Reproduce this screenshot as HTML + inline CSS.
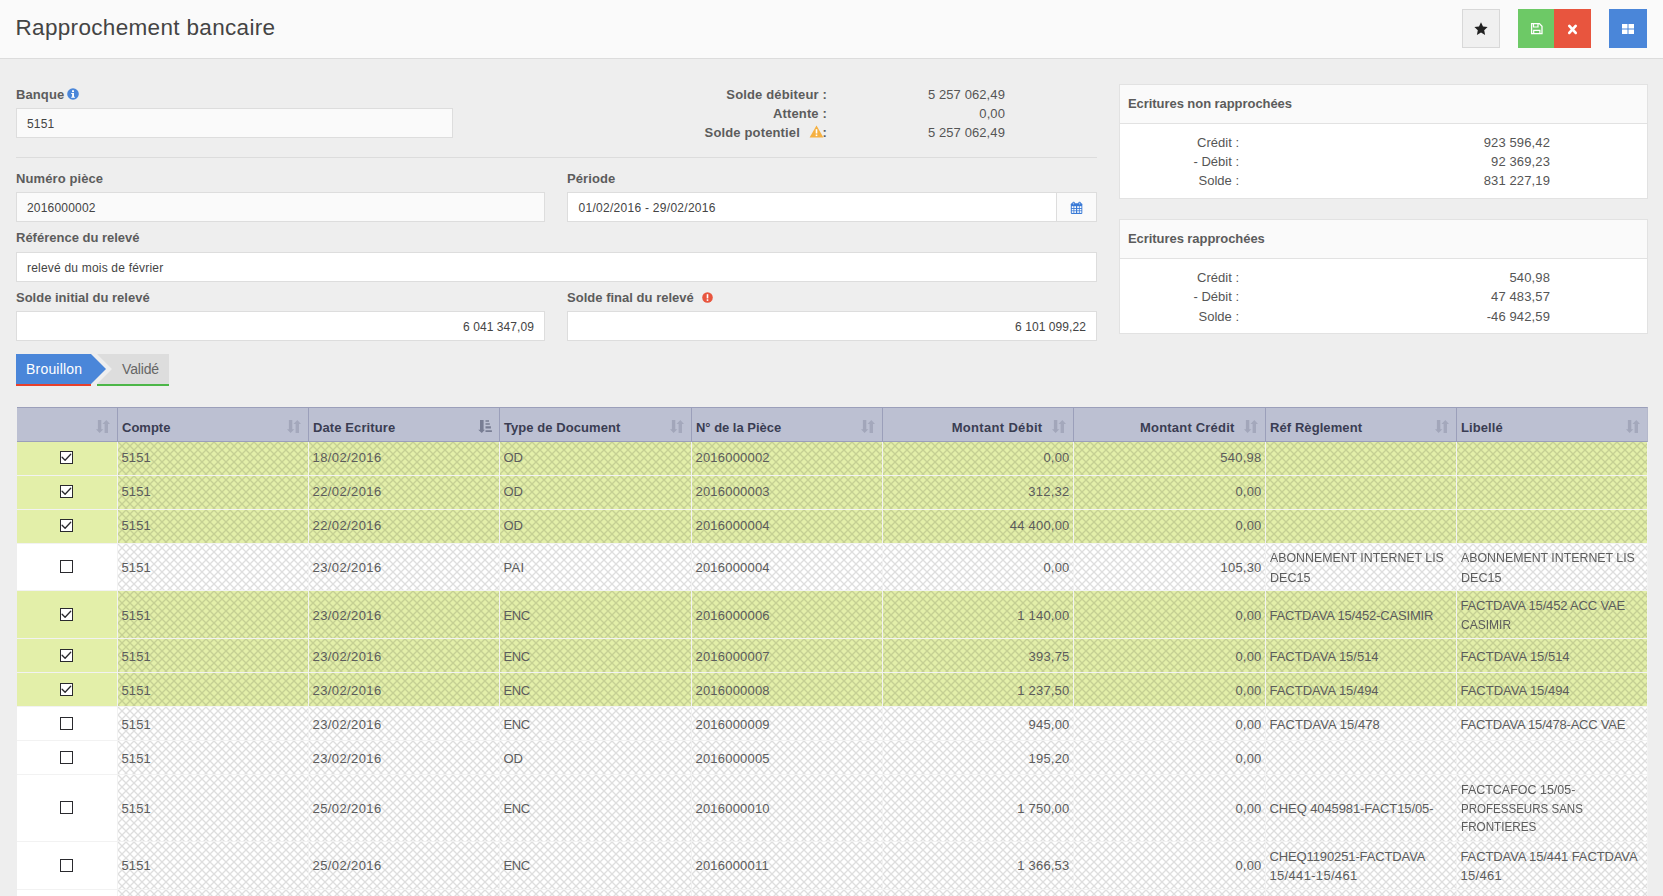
<!DOCTYPE html>
<html lang="fr">
<head>
<meta charset="utf-8">
<title>Rapprochement bancaire</title>
<style>
*{box-sizing:border-box;margin:0;padding:0}
html,body{width:1663px;height:896px;overflow:hidden}
body{background:#eee;font-family:"Liberation Sans",sans-serif;font-size:13px;color:#555;position:relative}
.abs{position:absolute}
#hdr{position:absolute;left:0;top:0;width:1663px;height:59px;background:#fafafa;border-bottom:1px solid #dcdcdc}
#title{position:absolute;left:15.5px;top:14px;font-size:22.5px;line-height:28px;color:#444;letter-spacing:.33px;white-space:nowrap}
.btn{position:absolute;top:9px;width:38px;height:38.5px}
.btn svg{position:absolute;left:0;top:1px}
.lbl{position:absolute;font-weight:bold;font-size:13px;line-height:19px;color:#5c5c5c;white-space:nowrap;letter-spacing:.1px}
.inp{position:absolute;height:30px;border:1px solid #ddd;background:#fff;font-size:12px;line-height:30px;color:#444;padding:0 10px;white-space:nowrap;letter-spacing:.2px}
.inp.ro{background:#fafafa}
.inp.r{text-align:right;letter-spacing:.08px}
.sum{position:absolute;font-size:13px;line-height:19px;white-space:nowrap;text-align:right;color:#555;letter-spacing:.1px}
.sum.b{font-weight:bold;letter-spacing:.15px;color:#5c5c5c}
.panel{position:absolute;left:1119px;width:529px;height:115px;background:#fff;border:1px solid #e2e2e2}
.panel .ph{height:39px;background:#fafafa;border-bottom:1px solid #e2e2e2;font-weight:bold;line-height:37px;padding-left:8px;color:#5c5c5c;letter-spacing:-.06px}
.panel .pr{position:absolute;left:0;width:100%;height:19px;line-height:19px}
.panel .pr span{position:absolute;top:0;text-align:right;white-space:nowrap}
.panel .pr .k{right:408px}
.panel .pr .v{right:97px;letter-spacing:.12px}
#grid{position:absolute;left:17px;top:407px;width:1631px;border-collapse:separate;border-spacing:0;table-layout:fixed;font-size:13px;color:#5c5c5c}
#grid th{height:35px;background:#bcc0d2;border:1px solid #9b9fba;border-left:none;text-align:left;padding:5px 4px 0 4px;font-weight:bold;color:#3a3d52;position:relative;white-space:nowrap;font-size:13px;letter-spacing:.1px}
#grid th:first-child{border-left:none}
#grid th.r{text-align:right;padding-right:30.500px}
#grid th:last-child{border-right-color:#b4b8cb}
#grid td{height:34px;padding:3.5px 4px 3.5px 3.5px;line-height:18.570px;border-right:1px solid #f2f2f2;border-bottom:1px solid #f2f2f2;vertical-align:middle;letter-spacing:.2px;
 background-color:#fff;
position:relative;isolation:isolate}
#grid td::before{content:"";position:absolute;left:0;top:0;right:0;bottom:0;z-index:-1;background:rgba(0,0,0,.13);
 -webkit-mask-image:linear-gradient(45deg,transparent 41.5%,#000 46.5%,#000 53.5%,transparent 58.5%),linear-gradient(-45deg,transparent 41.5%,#000 46.5%,#000 53.5%,transparent 58.5%);-webkit-mask-size:8px 8px;
 mask-image:linear-gradient(45deg,transparent 41.5%,#000 46.5%,#000 53.5%,transparent 58.5%),linear-gradient(-45deg,transparent 41.5%,#000 46.5%,#000 53.5%,transparent 58.5%);mask-size:8px 8px}
#grid td:first-child::before{display:none}
#grid td.r{text-align:right;padding-right:3.5px}
#grid td:first-child{background-image:none;text-align:center;padding:0}
#grid tr.g td{background-color:#e3efa9}
#grid td span.l{display:block;white-space:nowrap}
#grid td span.x{display:inline-block;transform-origin:0 50%;letter-spacing:0}
.cb{display:inline-block;width:13px;height:13px;border:1px solid #2a2a2e;background:#fff;vertical-align:middle;position:relative;top:-1px;left:-1px}
.cb svg{display:block}
#grid tr.lo td{padding-top:4.500px;padding-bottom:2.500px}
#grid tr.lo td:first-child{padding:0}
#grid tr.c0 .cb{top:0}
#grid tr.lh20 td{line-height:20px;padding-top:3px;padding-bottom:2px}
#grid tr.lh20 td:first-child{padding:0}
#grid tr.lo span.s1{position:relative;top:1px}
.sort{position:absolute;right:7.5px;top:12px}
</style>
</head>
<body>
<div id="hdr">
  <div id="title">Rapprochement bancaire</div>

  <div class="btn" style="left:1462px;background:#f0f0f0;border:1px solid #d8d8d8">
    <svg width="36" height="36" viewBox="0 0 36 36"><path d="M18 11.2l2 4.3 4.6.6-3.4 3.2.9 4.6-4.1-2.3-4.1 2.3.9-4.6-3.4-3.2 4.6-.6z" fill="#222"/></svg>
  </div>
  <div class="btn" style="left:1518px;width:36px;background:#6dc966">
    <svg width="36" height="38" viewBox="0 0 36 38"><path d="M13.600 13.600h7.800l2.600 2.600v7.400h-10.400z" fill="none" stroke="#fff" stroke-width="1.300"/><path d="M15.500 13.800v3.200h4.500v-3.200" fill="none" stroke="#fff" stroke-width="1.200"/><path d="M15.700 23.500v-3.200h6.200v3.200" fill="none" stroke="#fff" stroke-width="1.200"/></svg>
  </div>
  <div class="btn" style="left:1554px;width:37px;background:#e8553e">
    <svg width="37" height="38" viewBox="0 0 37 38"><path d="M15.300 15.900l6.400 7M21.700 15.900l-6.400 7" stroke="#fff" stroke-width="2.700" stroke-linecap="round" fill="none"/></svg>
  </div>
  <div class="btn" style="left:1609px;background:#4a86d9">
    <svg width="38" height="38" viewBox="0 0 38 38"><rect x="13" y="14" width="5.500" height="4.500" fill="#fff"/><rect x="19.500" y="14" width="5.500" height="4.500" fill="#fff"/><rect x="13" y="19.500" width="5.500" height="4.500" fill="#fff"/><rect x="19.500" y="19.500" width="5.500" height="4.500" fill="#fff"/></svg>
  </div>
</div>

<!-- form -->
<div class="lbl" style="left:16px;top:85px">Banque</div>
<svg class="abs" style="left:67px;top:88px" width="12" height="12" viewBox="0 0 12 12"><circle cx="6" cy="6" r="5.800" fill="#4a86d9"/><rect x="5" y="2.300" width="2" height="1.800" fill="#fff"/><path d="M4.200 5h2.800v3.700h.9v1h-3.700v-1h.9v-2.700h-.9z" fill="#fff"/></svg>
<div class="inp ro" style="left:16px;top:108px;width:437px">5151</div>

<div class="sum b" style="right:836px;top:85px">Solde débiteur :</div>
<div class="sum b" style="right:836px;top:104px">Attente :</div>
<div class="sum b" style="right:836px;top:123px">Solde potentiel &nbsp;<span style="display:inline-block;width:15px"></span>:</div>
<svg class="abs" style="left:809px;top:125px" width="15" height="13" viewBox="0 0 15 13"><path d="M7.500 .6L14.400 12.400H.6z" fill="#f5b041"/><rect x="6.700" y="4.200" width="1.600" height="4.300" fill="#fff"/><rect x="6.700" y="9.500" width="1.600" height="1.600" fill="#fff"/></svg>
<div class="sum" style="right:658px;top:85px">5 257 062,49</div>
<div class="sum" style="right:658px;top:104px">0,00</div>
<div class="sum" style="right:658px;top:123px">5 257 062,49</div>

<div class="abs" style="left:16px;top:157px;width:1081px;height:1px;background:#dcdcdc"></div>

<div class="lbl" style="left:16px;top:169px">Numéro pièce</div>
<div class="inp ro" style="left:16px;top:192px;width:529px">2016000002</div>
<div class="lbl" style="left:567px;top:169px">Période</div>
<div class="inp" style="left:567px;top:192px;width:490px;letter-spacing:.28px;padding-left:10.500px">01/02/2016 - 29/02/2016</div>
<div class="abs" style="left:1056px;top:192px;width:41px;height:30px;border:1px solid #ddd;background:#fafafa">
  <svg width="39" height="28" viewBox="0 0 39 28"><rect x="13.800" y="10.300" width="11.500" height="10.600" rx="1" fill="#3b7bd6"/><rect x="15.400" y="8.800" width="2.400" height="3" rx="1" fill="#3b7bd6"/><rect x="21.400" y="8.800" width="2.400" height="3" rx="1" fill="#3b7bd6"/><rect x="16.100" y="9.600" width="1" height="1.800" rx=".5" fill="#a9c4ec"/><rect x="22.100" y="9.600" width="1" height="1.800" rx=".5" fill="#a9c4ec"/><g fill="#fff"><rect x="14.8" y="13.2" width="1.7" height="1.9"/><rect x="14.8" y="16.0" width="1.7" height="1.4"/><rect x="14.8" y="18.2" width="1.7" height="1.7"/><rect x="17.3" y="13.2" width="1.7" height="1.9"/><rect x="17.3" y="16.0" width="1.7" height="1.4"/><rect x="17.3" y="18.2" width="1.7" height="1.7"/><rect x="20.2" y="13.2" width="1.7" height="1.9"/><rect x="20.2" y="16.0" width="1.7" height="1.4"/><rect x="20.2" y="18.2" width="1.7" height="1.7"/><rect x="22.7" y="13.2" width="1.7" height="1.9"/><rect x="22.7" y="16.0" width="1.7" height="1.4"/><rect x="22.7" y="18.2" width="1.7" height="1.7"/></g></svg>
</div>

<div class="lbl" style="left:16px;top:228px;letter-spacing:0">Référence du relevé</div>
<div class="inp" style="left:16px;top:252px;width:1081px">relevé du mois de février</div>

<div class="lbl" style="left:16px;top:288px;letter-spacing:0">Solde initial du relevé</div>
<div class="inp r" style="left:16px;top:311px;width:529px">6 041 347,09</div>
<div class="lbl" style="left:567px;top:288px;letter-spacing:.02px">Solde final du relevé</div>
<svg class="abs" style="left:702px;top:292px" width="11" height="11" viewBox="0 0 11 11"><circle cx="5.500" cy="5.500" r="5.300" fill="#e8553e"/><rect x="4.700" y="2.200" width="1.600" height="4.200" fill="#fff"/><rect x="4.700" y="7.300" width="1.600" height="1.600" fill="#fff"/></svg>
<div class="inp r" style="left:567px;top:311px;width:530px">6 101 099,22</div>

<!-- steps -->
<div class="abs" style="left:16px;top:354px;width:75px;height:32px;background:#4a86d9;border-bottom:2px solid #e8402c;color:#fff;font-size:14px;line-height:30px;padding-left:10px;letter-spacing:.2px">Brouillon</div>
<svg class="abs" style="left:91px;top:354px" width="16" height="32" viewBox="0 0 16 32"><path d="M0 0L15 15L0 30z" fill="#4a86d9"/><path d="M0 30h0v2h-0z" fill="#e8402c"/></svg>
<svg class="abs" style="left:97px;top:354px" width="72" height="32" viewBox="0 0 72 32"><path d="M0 0H72V30H0L15 15z" fill="#ddd"/><rect x="0" y="30" width="72" height="2" fill="#4cb648"/></svg>
<div class="abs" style="left:122px;top:354px;height:30px;line-height:30px;color:#666;font-size:14px;letter-spacing:-.15px">Validé</div>

<!-- panels -->
<div class="panel" style="top:84px">
  <div class="ph">Ecritures non rapprochées</div>
  <div class="pr" style="top:48px"><span class="k">Crédit :</span><span class="v">923 596,42</span></div>
  <div class="pr" style="top:67px"><span class="k">- Débit :</span><span class="v">92 369,23</span></div>
  <div class="pr" style="top:86px"><span class="k">Solde :</span><span class="v">831 227,19</span></div>
</div>
<div class="panel" style="top:219px">
  <div class="ph">Ecritures rapprochées</div>
  <div class="pr" style="top:48px"><span class="k">Crédit :</span><span class="v">540,98</span></div>
  <div class="pr" style="top:67px"><span class="k">- Débit :</span><span class="v">47 483,57</span></div>
  <div class="pr" style="top:87px"><span class="k">Solde :</span><span class="v">-46 942,59</span></div>
</div>
<!-- grid -->
<table id="grid">
<colgroup><col style="width:101px"><col style="width:191px"><col style="width:191px"><col style="width:192px"><col style="width:191px"><col style="width:191px"><col style="width:192px"><col style="width:191px"><col style="width:191px"></colgroup>
<thead><tr><th><svg class="sort" width="14" height="13" viewBox="0 0 14 13"><path d="M1.900 0h3.400v9.200h2L3.600 13-.1 9.200h2z" fill="#a2a6ba"/><path d="M8.600 13V4h-2.100L10.300 0l3.800 4h-2.100v9z" fill="#a4a8bc"/></svg></th><th><span class="l" style="letter-spacing:0.00px">Compte</span><svg class="sort" width="14" height="13" viewBox="0 0 14 13"><path d="M1.900 0h3.400v9.200h2L3.600 13-.1 9.200h2z" fill="#a2a6ba"/><path d="M8.600 13V4h-2.100L10.300 0l3.800 4h-2.100v9z" fill="#a4a8bc"/></svg></th><th><span class="l" style="letter-spacing:0.10px">Date Ecriture</span><svg class="sort" style="right:7px" width="14" height="13" viewBox="0 0 14 13"><path d="M2 0h3.600v9.800h1.300L3.800 13 .2 9.800H2z" fill="#787d93"/><path d="M7.500 .2h3.500v1.500H7.500zM7.500 3.200h4.300v1.500H7.500zM7.500 6.300h5.400v2.300H7.500zM7.500 10.200h6.400v1.700H7.500z" fill="#787d93"/></svg></th><th><span class="l" style="letter-spacing:0.07px">Type de Document</span><svg class="sort" width="14" height="13" viewBox="0 0 14 13"><path d="M1.900 0h3.400v9.200h2L3.600 13-.1 9.200h2z" fill="#a2a6ba"/><path d="M8.600 13V4h-2.100L10.300 0l3.800 4h-2.100v9z" fill="#a4a8bc"/></svg></th><th><span class="l" style="letter-spacing:-0.02px">N° de la Pièce</span><svg class="sort" width="14" height="13" viewBox="0 0 14 13"><path d="M1.900 0h3.400v9.200h2L3.600 13-.1 9.200h2z" fill="#a2a6ba"/><path d="M8.600 13V4h-2.100L10.300 0l3.800 4h-2.100v9z" fill="#a4a8bc"/></svg></th><th class="r"><span class="l" style="letter-spacing:0.32px">Montant Débit</span><svg class="sort" width="14" height="13" viewBox="0 0 14 13"><path d="M1.900 0h3.400v9.200h2L3.600 13-.1 9.200h2z" fill="#a2a6ba"/><path d="M8.600 13V4h-2.100L10.300 0l3.800 4h-2.100v9z" fill="#a4a8bc"/></svg></th><th class="r"><span class="l" style="letter-spacing:0.20px">Montant Crédit</span><svg class="sort" width="14" height="13" viewBox="0 0 14 13"><path d="M1.900 0h3.400v9.200h2L3.600 13-.1 9.200h2z" fill="#a2a6ba"/><path d="M8.600 13V4h-2.100L10.300 0l3.800 4h-2.100v9z" fill="#a4a8bc"/></svg></th><th><span class="l" style="letter-spacing:0.08px">Réf Règlement</span><svg class="sort" width="14" height="13" viewBox="0 0 14 13"><path d="M1.900 0h3.400v9.200h2L3.600 13-.1 9.200h2z" fill="#a2a6ba"/><path d="M8.600 13V4h-2.100L10.300 0l3.800 4h-2.100v9z" fill="#a4a8bc"/></svg></th><th><span class="l">Libellé</span><svg class="sort" width="14" height="13" viewBox="0 0 14 13"><path d="M1.900 0h3.400v9.200h2L3.600 13-.1 9.200h2z" fill="#a2a6ba"/><path d="M8.600 13V4h-2.100L10.300 0l3.800 4h-2.100v9z" fill="#a4a8bc"/></svg></th></tr></thead>
<tbody>
<tr class="g" style="height:34px"><td><span class="cb"><svg width="11" height="11" viewBox="0 0 11 11"><path d="M1.100 5.200l3 3.100 5.600-6" fill="none" stroke="#2a2a2e" stroke-width="1.300" stroke-linecap="round" stroke-linejoin="round"/></svg></span></td><td><span class="l" style="letter-spacing:0.10px">5151</span></td><td><span class="l" style="letter-spacing:0.40px">18/02/2016</span></td><td><span class="l" style="letter-spacing:0.00px">OD</span></td><td><span class="l" style="letter-spacing:0.20px">2016000002</span></td><td class="r"><span class="l">0,00</span></td><td class="r"><span class="l" style="letter-spacing:0.25px">540,98</span></td><td></td><td></td></tr>
<tr class="g" style="height:34px"><td><span class="cb"><svg width="11" height="11" viewBox="0 0 11 11"><path d="M1.100 5.200l3 3.100 5.600-6" fill="none" stroke="#2a2a2e" stroke-width="1.300" stroke-linecap="round" stroke-linejoin="round"/></svg></span></td><td><span class="l" style="letter-spacing:0.10px">5151</span></td><td><span class="l" style="letter-spacing:0.40px">22/02/2016</span></td><td><span class="l" style="letter-spacing:0.00px">OD</span></td><td><span class="l" style="letter-spacing:0.20px">2016000003</span></td><td class="r"><span class="l" style="letter-spacing:0.25px">312,32</span></td><td class="r"><span class="l">0,00</span></td><td></td><td></td></tr>
<tr class="g" style="height:34px"><td><span class="cb"><svg width="11" height="11" viewBox="0 0 11 11"><path d="M1.100 5.200l3 3.100 5.600-6" fill="none" stroke="#2a2a2e" stroke-width="1.300" stroke-linecap="round" stroke-linejoin="round"/></svg></span></td><td><span class="l" style="letter-spacing:0.10px">5151</span></td><td><span class="l" style="letter-spacing:0.40px">22/02/2016</span></td><td><span class="l" style="letter-spacing:0.00px">OD</span></td><td><span class="l" style="letter-spacing:0.20px">2016000004</span></td><td class="r"><span class="l">44 400,00</span></td><td class="r"><span class="l">0,00</span></td><td></td><td></td></tr>
<tr class="lo lh20" style="height:47px"><td><span class="cb"></span></td><td><span class="l" style="letter-spacing:0.10px">5151</span></td><td><span class="l" style="letter-spacing:0.40px">23/02/2016</span></td><td><span class="l" style="letter-spacing:0.30px">PAI</span></td><td><span class="l" style="letter-spacing:0.20px">2016000004</span></td><td class="r"><span class="l">0,00</span></td><td class="r"><span class="l">105,30</span></td><td><span class="l"><span class="x" style="transform:scaleX(0.950)">ABONNEMENT INTERNET LIS</span></span><span class="l"><span class="x" style="transform:scaleX(0.965)">DEC15</span></span></td><td><span class="l"><span class="x" style="transform:scaleX(0.950)">ABONNEMENT INTERNET LIS</span></span><span class="l"><span class="x" style="transform:scaleX(0.965)">DEC15</span></span></td></tr>
<tr class="g lo c0" style="height:48px"><td><span class="cb"><svg width="11" height="11" viewBox="0 0 11 11"><path d="M1.100 5.200l3 3.100 5.600-6" fill="none" stroke="#2a2a2e" stroke-width="1.300" stroke-linecap="round" stroke-linejoin="round"/></svg></span></td><td><span class="l s1" style="letter-spacing:0.10px">5151</span></td><td><span class="l s1" style="letter-spacing:0.40px">23/02/2016</span></td><td><span class="l s1" style="letter-spacing:-0.40px">ENC</span></td><td><span class="l s1" style="letter-spacing:0.20px">2016000006</span></td><td class="r"><span class="l s1">1 140,00</span></td><td class="r"><span class="l s1">0,00</span></td><td><span class="l s1" style="letter-spacing:-0.18px">FACTDAVA 15/452-CASIMIR</span></td><td><span class="l" style="letter-spacing:-0.17px">FACTDAVA 15/452 ACC VAE</span><span class="l"><span class="x" style="transform:scaleX(0.924)">CASIMIR</span></span></td></tr>
<tr class="g lo c0" style="height:34px"><td><span class="cb"><svg width="11" height="11" viewBox="0 0 11 11"><path d="M1.100 5.200l3 3.100 5.600-6" fill="none" stroke="#2a2a2e" stroke-width="1.300" stroke-linecap="round" stroke-linejoin="round"/></svg></span></td><td><span class="l s1" style="letter-spacing:0.10px">5151</span></td><td><span class="l s1" style="letter-spacing:0.40px">23/02/2016</span></td><td><span class="l s1" style="letter-spacing:-0.40px">ENC</span></td><td><span class="l s1" style="letter-spacing:0.20px">2016000007</span></td><td class="r"><span class="l s1">393,75</span></td><td class="r"><span class="l s1">0,00</span></td><td><span class="l s1" style="letter-spacing:-0.02px">FACTDAVA 15/514</span></td><td><span class="l s1" style="letter-spacing:-0.02px">FACTDAVA 15/514</span></td></tr>
<tr class="g lo c0" style="height:34px"><td><span class="cb"><svg width="11" height="11" viewBox="0 0 11 11"><path d="M1.100 5.200l3 3.100 5.600-6" fill="none" stroke="#2a2a2e" stroke-width="1.300" stroke-linecap="round" stroke-linejoin="round"/></svg></span></td><td><span class="l s1" style="letter-spacing:0.10px">5151</span></td><td><span class="l s1" style="letter-spacing:0.40px">23/02/2016</span></td><td><span class="l s1" style="letter-spacing:-0.40px">ENC</span></td><td><span class="l s1" style="letter-spacing:0.20px">2016000008</span></td><td class="r"><span class="l s1">1 237,50</span></td><td class="r"><span class="l s1">0,00</span></td><td><span class="l s1" style="letter-spacing:-0.02px">FACTDAVA 15/494</span></td><td><span class="l s1" style="letter-spacing:-0.02px">FACTDAVA 15/494</span></td></tr>
<tr class="lo c0" style="height:34px"><td><span class="cb"></span></td><td><span class="l s1" style="letter-spacing:0.10px">5151</span></td><td><span class="l s1" style="letter-spacing:0.40px">23/02/2016</span></td><td><span class="l s1" style="letter-spacing:-0.40px">ENC</span></td><td><span class="l s1" style="letter-spacing:0.20px">2016000009</span></td><td class="r"><span class="l s1">945,00</span></td><td class="r"><span class="l s1">0,00</span></td><td><span class="l s1" style="letter-spacing:0.07px">FACTDAVA 15/478</span></td><td><span class="l s1" style="letter-spacing:-0.22px">FACTDAVA 15/478-ACC VAE</span></td></tr>
<tr class="lo c0" style="height:34px"><td><span class="cb"></span></td><td><span class="l s1" style="letter-spacing:0.10px">5151</span></td><td><span class="l s1" style="letter-spacing:0.40px">23/02/2016</span></td><td><span class="l s1" style="letter-spacing:0.00px">OD</span></td><td><span class="l s1" style="letter-spacing:0.20px">2016000005</span></td><td class="r"><span class="l s1">195,20</span></td><td class="r"><span class="l s1">0,00</span></td><td></td><td></td></tr>
<tr class="lo" style="height:67px"><td><span class="cb"></span></td><td><span class="l" style="letter-spacing:0.10px">5151</span></td><td><span class="l" style="letter-spacing:0.40px">25/02/2016</span></td><td><span class="l" style="letter-spacing:-0.40px">ENC</span></td><td><span class="l" style="letter-spacing:0.20px">2016000010</span></td><td class="r"><span class="l">1 750,00</span></td><td class="r"><span class="l">0,00</span></td><td><span class="l" style="letter-spacing:-0.10px">CHEQ 4045981-FACT15/05-</span></td><td><span class="l"><span class="x" style="transform:scaleX(0.959)">FACTCAFOC 15/05-</span></span><span class="l"><span class="x" style="transform:scaleX(0.888)">PROFESSEURS SANS</span></span><span class="l"><span class="x" style="transform:scaleX(0.898)">FRONTIERES</span></span></td></tr>
<tr class="lo c0" style="height:48px"><td><span class="cb"></span></td><td><span class="l" style="letter-spacing:0.10px">5151</span></td><td><span class="l" style="letter-spacing:0.40px">25/02/2016</span></td><td><span class="l" style="letter-spacing:-0.40px">ENC</span></td><td><span class="l" style="letter-spacing:0.20px">2016000011</span></td><td class="r"><span class="l">1 366,53</span></td><td class="r"><span class="l">0,00</span></td><td><span class="l" style="letter-spacing:-0.12px">CHEQ1190251-FACTDAVA</span><span class="l" style="letter-spacing:0.32px">15/441-15/461</span></td><td><span class="l" style="letter-spacing:-0.11px">FACTDAVA 15/441 FACTDAVA</span><span class="l" style="letter-spacing:0.30px">15/461</span></td></tr>
<tr class="lo" style="height:34px"><td><span class="cb"></span></td><td><span class="l" style="letter-spacing:0.10px">5151</span></td><td><span class="l" style="letter-spacing:0.40px">25/02/2016</span></td><td><span class="l" style="letter-spacing:-0.40px">ENC</span></td><td><span class="l">2016000012</span></td><td class="r"></td><td class="r"></td><td></td><td></td></tr>
</tbody></table>
</body>
</html>
